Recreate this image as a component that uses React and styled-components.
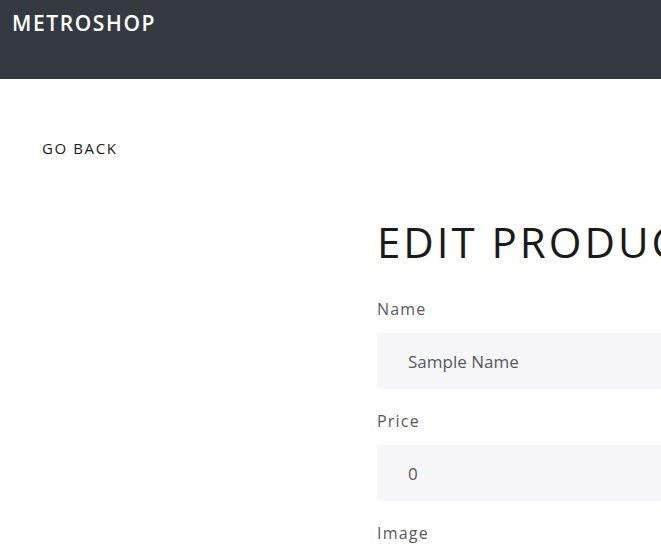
import React from "react";
import styled, { createGlobalStyle } from "styled-components";

const Global = createGlobalStyle`
  html, body { margin: 0; padding: 0; background: #fff; overflow-x: hidden; }
  body { font-family: "Open Sans", "Noto Sans", sans-serif; color: #55595c; }
  * { box-sizing: border-box; }
`;

const NavBar = styled.header`
  height: 79px;
  background: #343a40;
  padding: 9px 12px;
`;

const Brand = styled.a`
  display: inline-block;
  color: #fff;
  font-size: 21px;
  font-weight: 600;
  line-height: 28px;
  letter-spacing: 1.6px;
  text-decoration: none;
  text-transform: uppercase;
`;

const Main = styled.main`
  padding: 49px 18px 0;
`;

const GoBack = styled.a`
  display: inline-block;
  padding: 10px 24px;
  font-size: 15px;
  line-height: 20px;
  letter-spacing: 1.6px;
  color: #1a1a1a;
  text-transform: uppercase;
  text-decoration: none;
`;

const FormArea = styled.section`
  display: grid;
  grid-template-columns: 359px 600px;
  margin-top: 49px;
`;

const Title = styled.h1`
  margin: 0 0 30px;
  font-size: 42px;
  font-weight: 400;
  line-height: 50px;
  letter-spacing: 3px;
  color: #1a1a1a;
  text-transform: uppercase;
`;

const Group = styled.div`
  margin-bottom: 20px;
`;

const Label = styled.label`
  display: block;
  font-size: 16px;
  line-height: 24px;
  letter-spacing: 1.2px;
  color: #55595c;
  margin-bottom: 12px;
`;

const Input = styled.input`
  display: block;
  width: 100%;
  height: 56px;
  border: none;
  background: #f7f7f9;
  padding: 0 31px;
  font-family: inherit;
  font-size: 17px;
  color: #55595c;
  outline: none;
`;

export default function App() {
  return (
    <>
      <Global />
      <NavBar>
        <Brand href="#">MetroShop</Brand>
      </NavBar>
      <Main>
        <GoBack href="#">Go Back</GoBack>
        <FormArea>
          <div />
          <div>
            <Title>Edit Product</Title>
            <Group>
              <Label>Name</Label>
              <Input defaultValue="Sample Name" />
            </Group>
            <Group>
              <Label>Price</Label>
              <Input defaultValue="0" />
            </Group>
            <Group>
              <Label>Image</Label>
              <Input defaultValue="" />
            </Group>
          </div>
        </FormArea>
      </Main>
    </>
  );
}
